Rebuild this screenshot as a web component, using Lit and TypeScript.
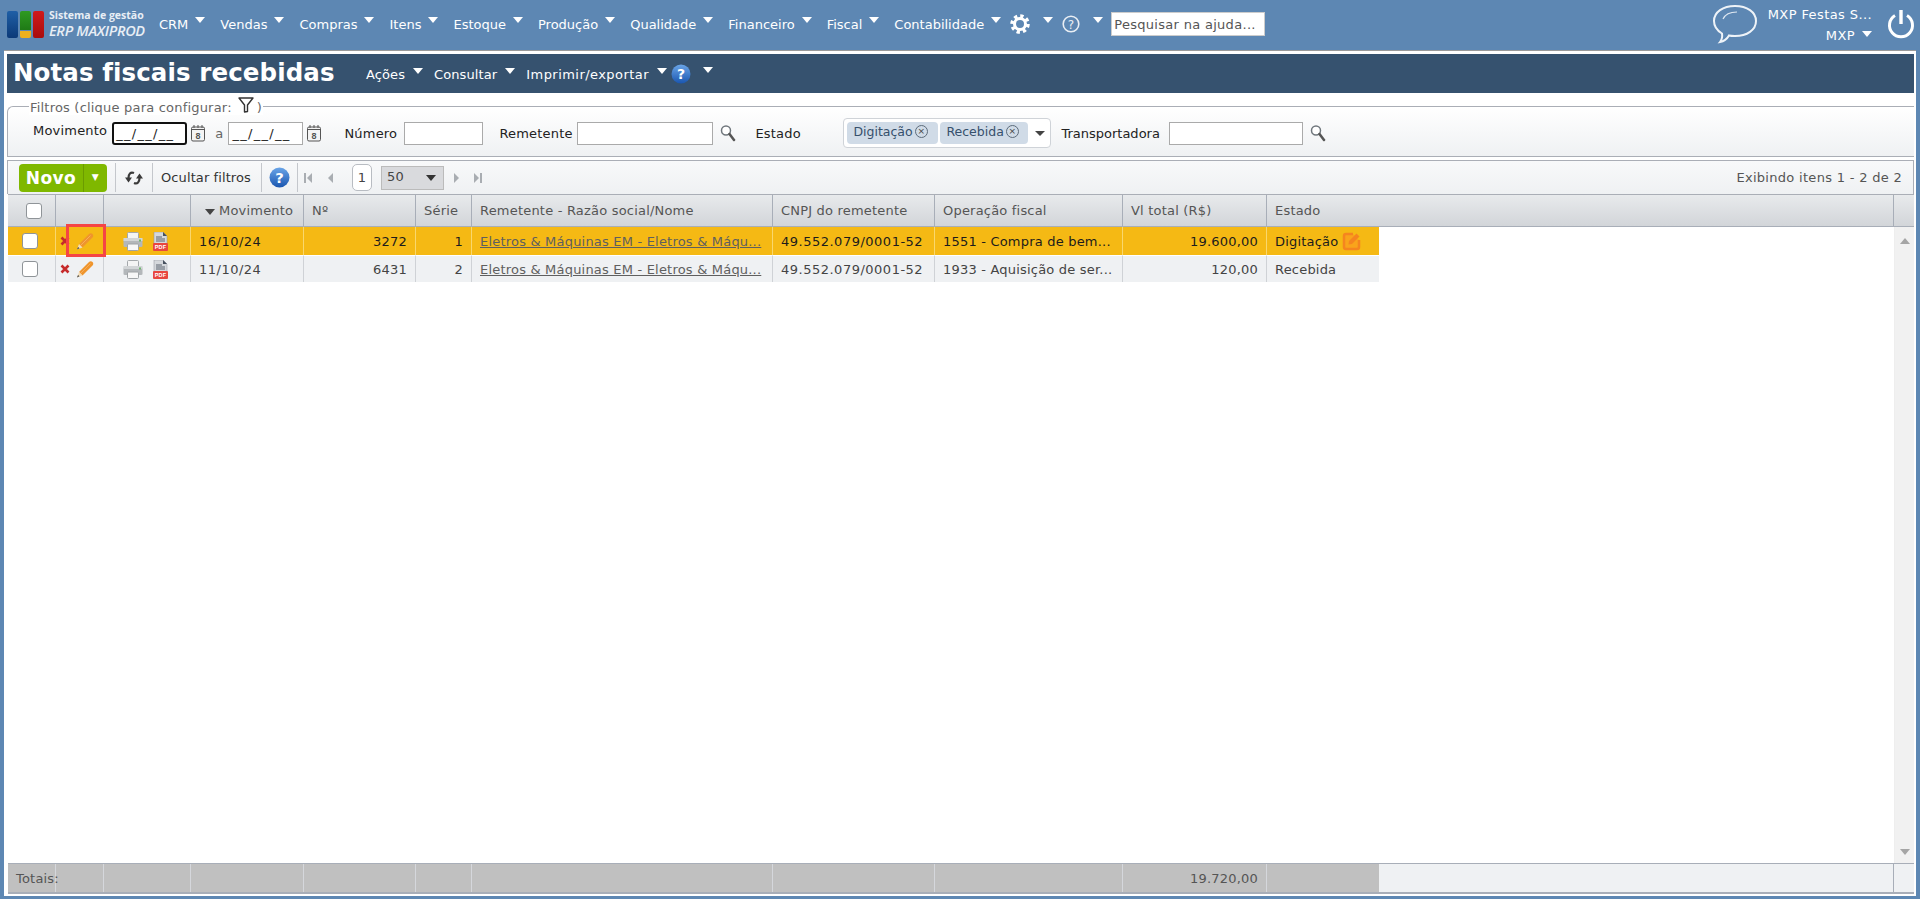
import { LitElement, html, css, svg } from "lit";
import { customElement } from "lit/decorators.js";

const pencil = svg`<svg class="pencil" viewBox="0 0 18 18" width="18" height="18"><path d="M3 12 L13 2 C14 1 15.500 1 16.500 2 C17.500 3 17.500 4.500 16.500 5.500 L6.500 15.500 Z" fill="#ef952c"/><path d="M4.500 13.500 L14.500 3.500" stroke="#f6ad5c" stroke-width="1"/><path d="M3 12 L6.500 15.500 L1 17.500 Z" fill="#f3dcb6"/><path d="M1 17.500 L2 15 L3.500 16.300 Z" fill="#444"/></svg>`;
const cross = svg`<svg viewBox="0 0 10 10" width="10" height="10"><path d="M1.500 1.500 L8.500 8.500 M8.500 1.500 L1.500 8.500" stroke="#c62b2b" stroke-width="2.600"/></svg>`;
const printer = svg`<svg viewBox="0 0 20 19" width="20" height="19"><rect x="4.500" y="0.500" width="11" height="7" rx="1" fill="#f4f4f4" stroke="#a4a8ab"/><path d="M0.500 9 Q0.500 6 3 6 H17 Q19.500 6 19.500 9 V14 Q19.500 15 18 15 H2 Q0.500 15 0.500 14 Z" fill="#b3b7ba"/><rect x="0.500" y="6" width="19" height="3" fill="#d2d5d7"/><rect x="16" y="7.500" width="2" height="2" fill="#6fb56f"/><rect x="4.500" y="12" width="11" height="6.500" rx="1" fill="#f7f7f7" stroke="#9fa3a6"/></svg>`;
const pdf = svg`<svg viewBox="0 0 15 19" width="15" height="19"><path d="M1 0 H10 L14 4 V12 H1 Z" fill="#d5d8dc" stroke="#8d939b" stroke-width="0.500"/><path d="M10 0 L14 4 H10 Z" fill="#46505e"/><path d="M3 5 H9 M3 7 H12 M3 9 H12" stroke="#5c6570" stroke-width="1"/><rect x="0" y="11" width="15" height="8" rx="1" fill="#e8473f"/><text x="7.500" y="17.300" font-size="5.500" font-weight="700" text-anchor="middle" fill="#fff" font-family="Liberation Sans, sans-serif">PDF</text></svg>`;
const editBox = svg`<svg viewBox="0 0 20 20" width="20" height="20"><path d="M11 3 H4 Q2 3 2 5 V16 Q2 18 4 18 H15 Q17 18 17 16 V9" fill="#f9a41b" stroke="#f5851f" stroke-width="2.500"/><path d="M7 10 L14.500 2.500 L17.500 5.500 L10 13 L6.500 13.500 Z" fill="#f5851f"/></svg>`;
const calendar = svg`<svg viewBox="0 0 16 18" width="16" height="18"><rect x="1.500" y="3" width="13" height="14" rx="1.500" fill="#f4f4f4" stroke="#555"/><path d="M2 5.500 H14" stroke="#555"/><path d="M4 1 V4 M8 1 V4 M12 1 V4" stroke="#555"/><text x="8" y="15" font-size="9" font-weight="700" text-anchor="middle" fill="#555" font-family="Liberation Sans, sans-serif">8</text></svg>`;
const search = svg`<svg viewBox="0 0 16 18" width="16" height="18"><circle cx="6" cy="6.500" r="4.500" fill="#fff" stroke="#6f767c" stroke-width="1.500"/><path d="M9.500 10 L14 16" stroke="#555" stroke-width="2.500" stroke-linecap="round"/></svg>`;
const funnel = svg`<svg viewBox="0 0 16 16" width="16" height="16"><path d="M1 1 H15 L9.500 8 V14.500 L6.500 15 V8 Z" fill="#fff" stroke="#333" stroke-width="1.400" stroke-linejoin="round"/></svg>`;
const gear = svg`<svg viewBox="0 0 20 20" width="20" height="20"><circle cx="10" cy="10" r="5.500" fill="none" stroke="#fff" stroke-width="3"/><circle cx="10" cy="10" r="8" fill="none" stroke="#fff" stroke-width="3.500" stroke-dasharray="3.280 3"/></svg>`;
const helpOutline = svg`<svg viewBox="0 0 18 18" width="18" height="18"><circle cx="9" cy="9" r="7.800" fill="none" stroke="#e9eef4" stroke-width="1.600"/><text x="9" y="13.500" font-size="12" text-anchor="middle" fill="#e9eef4" font-family="DejaVu Sans, sans-serif">?</text></svg>`;
const helpBlue = (s: number) => svg`<svg viewBox="0 0 20 20" width=${s} height=${s}><defs><linearGradient id="hb" x1="0" y1="0" x2="0" y2="1"><stop offset="0" stop-color="#6aa5e8"/><stop offset="1" stop-color="#1a56b0"/></linearGradient></defs><circle cx="10" cy="10" r="9.500" fill="url(#hb)"/><text x="10" y="15" font-size="14" font-weight="700" text-anchor="middle" fill="#fff" font-family="DejaVu Sans, sans-serif">?</text></svg>`;
const chat = svg`<svg viewBox="0 0 46 40" width="46" height="40"><path d="M23 2 C35 2 44 8 44 17 C44 26 35 32 23 32 C21 32 19 32 17 31.500 C15 35 11 37.500 8 38 C10 35.500 10.500 32.500 10 29.500 C5 26.500 2 22 2 17 C2 8 11 2 23 2 Z" fill="none" stroke="#eef3f8" stroke-width="2"/><path d="M11 15 C13 10.500 18 8 25 8" fill="none" stroke="#dfe8f1" stroke-width="1.200"/></svg>`;
const power = svg`<svg viewBox="0 0 28 30" width="28" height="30"><path d="M8 6.500 A11.500 11.500 0 1 0 20 6.500" fill="none" stroke="#fff" stroke-width="3"/><path d="M14 1 V15" stroke="#fff" stroke-width="3.400"/></svg>`;
const refresh = svg`<svg viewBox="0 0 18 16" width="18" height="16"><path d="M9 3 C5.500 1.500 3.500 4 3.500 8" fill="none" stroke="#3a3a3a" stroke-width="2.200"/><path d="M0 7.500 H7 L3.500 12.500 Z" fill="#3a3a3a"/><path d="M9 13 C12.500 14.500 14.500 12 14.500 8" fill="none" stroke="#3a3a3a" stroke-width="2.200"/><path d="M11 8.500 H18 L14.500 3.500 Z" fill="#3a3a3a"/></svg>`;
const pageArrow = (d: string, barX: number | null) => svg`<svg viewBox="0 0 10 14" width="10" height="14"><path d=${d} fill="#a9adb2"/>${barX !== null ? svg`<rect x=${barX} y="2" width="2" height="10" fill="#a9adb2"/>` : ""}</svg>`;

const COLS = [
  { label: "", cls: "" },
  { label: "", cls: "" },
  { label: "", cls: "" },
  { label: "Movimento", cls: "sorted" },
  { label: "Nº", cls: "" },
  { label: "Série", cls: "" },
  { label: "Remetente - Razão social/Nome", cls: "" },
  { label: "CNPJ do remetente", cls: "" },
  { label: "Operação fiscal", cls: "" },
  { label: "Vl total (R$)", cls: "" },
  { label: "Estado", cls: "" },
];

const ROWS = [
  { date: "16/10/24", num: "3272", serie: "1", rem: "Eletros & Máquinas EM - Eletros & Máqu...", cnpj: "49.552.079/0001-52", op: "1551 - Compra de bem...", total: "19.600,00", estado: "Digitação", sel: true },
  { date: "11/10/24", num: "6431", serie: "2", rem: "Eletros & Máquinas EM - Eletros & Máqu...", cnpj: "49.552.079/0001-52", op: "1933 - Aquisição de ser...", total: "120,00", estado: "Recebida", sel: false },
];

const MENU = ["CRM", "Vendas", "Compras", "Itens", "Estoque", "Produção", "Qualidade", "Financeiro", "Fiscal", "Contabilidade"];

@customElement("app-root")
export class AppRoot extends LitElement {
  static styles = css`
    :host { display: block; height: 899px; background: #5d87b3; font-family: "DejaVu Sans", Verdana, sans-serif; font-size: 13px; letter-spacing: 0.2px; color: #333; overflow: hidden; }
    * { box-sizing: border-box; }
    .caret { width: 0; height: 0; border-left: 5.5px solid transparent; border-right: 5.5px solid transparent; border-top: 6px solid #fff; flex: none; margin-top: -8px; }
    svg { display: block; flex: none; }

    .top { height: 50px; display: flex; align-items: center; color: #fff; padding-bottom: 2px; letter-spacing: 0; }
    .logo { width: 159px; height: 48px; padding-left: 7px; display: flex; align-items: center; gap: 5px; flex: none; }
    .blocks { display: flex; gap: 2px; height: 27px; }
    .b { width: 11px; border-radius: 2px; }
    .b1 { background: linear-gradient(#1f5fa6, #0c3a78); }
    .b2 { display: flex; flex-direction: column; gap: 1px; }
    .b2 i { display: block; background: linear-gradient(#2f9a22, #1f7a16); height: 19px; border-radius: 2px 2px 0 0; }
    .b2 u { display: block; background: #eeb01e; height: 7px; border-radius: 0 0 2px 2px; }
    .b3 { background: linear-gradient(#d01a1a, #a80c0c); }
    .logo-t { font-family: "Open Sans", sans-serif; color: #e8eef5; line-height: 1; }
    .logo-t b { display: block; font-size: 10.500px; font-weight: 700; margin-bottom: 4px; }
    .logo-t em { display: block; font-size: 14.500px; font-weight: 600; letter-spacing: -0.3px; white-space: nowrap; }
    .menu { display: flex; align-items: center; gap: 15px; }
    .mi { display: flex; align-items: center; gap: 7px; font-size: 13px; line-height: 1; white-space: nowrap; }
    .tools { display: flex; align-items: center; margin-left: 9px; }
    .tools .caret.a { margin-left: 13px; }
    .tools .q { margin-left: 9px; }
    .tools .caret.c { margin-left: 13px; }
    .hsearch { width: 154px; height: 24px; margin-left: 8px; background: #fff; border: 1px solid #ccc; color: #555; font-size: 13px; letter-spacing: 0.3px; padding: 0 0 0 2px; display: flex; align-items: center; white-space: nowrap; }
    .user { margin-left: auto; display: flex; align-items: center; }
    .uname { margin-left: 8px; width: 106px; text-align: right; font-size: 13px; letter-spacing: 0.4px; line-height: 1; display: flex; flex-direction: column; gap: 8px; padding-top: 2px; }
    .uorg { display: flex; align-items: center; justify-content: flex-end; gap: 7px; }
    .uorg .caret { margin-top: -4px; }
    .pw { margin: 0 5px 0 15px; }

    .main { height: 846px; margin: 0 4px; background: #fff; border-top: 1px solid #9a9a9a; padding: 3px 2px 0 3px; display: flex; flex-direction: column; }
    .titlebar { height: 39px; background: #36526f; display: flex; align-items: center; color: #fff; padding-left: 6px; flex: none; letter-spacing: 0; }
    h1 { margin: 0; font-size: 24.500px; font-weight: 700; line-height: 1; width: 353px; letter-spacing: 0.1px; white-space: nowrap; }
    .tm { display: flex; align-items: center; gap: 8px; font-size: 13px; letter-spacing: 0.1px; white-space: nowrap; padding-top: 2px; }
    .tm + .tm { margin-left: 11px; }
    .tm.wide { letter-spacing: 0.45px; }
    .tmh { margin-left: 4px; }
    .tmc { margin-left: 12px; }

    .filters { height: 51px; margin-top: 13px; border-top: 1px solid #aaaeb6; border-left: 1px solid #aaaeb6; border-bottom: 1px solid #aaaeb6; border-top-left-radius: 6px; background: linear-gradient(#fff, #eff1f3); flex: none; }
    .legend { display: flex; align-items: center; width: fit-content; height: 15px; margin: -7px 0 0 21px; padding: 0 1px; background: #fff; color: #666; white-space: nowrap; }
    .legend svg { margin: -6px 3px 0 6px; }
    .frow { display: flex; align-items: center; height: 30px; margin-top: 3px; white-space: nowrap; }
    .frow label { display: block; }
    .inp { height: 23px; border: 1px solid #aaa; background: #fff; flex: none; font-size: 13px; color: #222; line-height: 21px; padding: 0 0 0 3px; overflow: hidden; }
    .inp.date { width: 75px; letter-spacing: 1.3px; }
    .inp.focus { border: 2px solid #111; border-radius: 3px; line-height: 19px; padding-left: 2px; }
    .l-mov { margin: -6px 5px 0 25px; color: #222; }
    .l-a { margin: 0 5px 0 9px; color: #666; }
    .cal { margin-left: 3px; }
    .l-num { margin-left: 22px; width: 60px; color: #222; }
    .w-num { width: 79px; }
    .l-rem { margin-left: 16px; width: 78px; color: #222; }
    .w-rem { width: 136px; }
    .srch { margin-left: 7px; }
    .l-est { margin-left: 19px; width: 88px; color: #222; }
    .ms { width: 208px; height: 30px; background: #fff; border: 1px solid #cfd3d8; border-radius: 4px; display: flex; align-items: center; padding-left: 3px; gap: 2px; position: relative; flex: none; }
    .chip { height: 22px; background: #d0dbe7; border-radius: 4px; display: flex; align-items: center; padding: 0 3px 3px 6px; color: #36506c; gap: 2px; font-size: 12.500px; letter-spacing: 0; }
    .chip .x { width: 13px; height: 13px; border: 1px solid #5c6b7a; border-radius: 50%; font-size: 9px; line-height: 10px; text-align: center; color: #444; }
    .c1 { width: 91px; }
    .c2 { width: 88px; }
    .ms .dn { width: 0; height: 0; border-left: 5px solid transparent; border-right: 5px solid transparent; border-top: 5px solid #444; margin-left: 5px; }
    .l-tr { margin-left: 10px; width: 108px; color: #222; letter-spacing: 0; }
    .w-tr { width: 134px; }

    .toolbar { height: 34px; margin-top: 3px; border: 1px solid #aaaeb6; border-bottom: 0; background: linear-gradient(#f8f9fa, #eff1f3); display: flex; align-items: center; flex: none; }
    .novo { margin-left: 11px; width: 88px; height: 28px; border-radius: 4px; background: #7fb800; display: flex; color: #fff; font-weight: 700; flex: none; margin-top: 1px; letter-spacing: 0.4px; }
    .novo .n1 { width: 64px; font-size: 17px; line-height: 28px; text-align: center; }
    .novo .n2 { width: 24px; border-left: 1px solid #6b9c00; border-radius: 0 4px 4px 0; font-size: 9px; line-height: 27px; text-align: center; }
    .sep { width: 1px; height: 29px; background: #c4c7cc; flex: none; }
    .s1 { margin-left: 8px; }
    .rf { margin: 0 9px 0 9px; }
    .hide { margin: 0 9px; color: #333; white-space: nowrap; width: 90px; letter-spacing: 0.1px; margin-left: 8px; margin-right: 10px; }
    .hb { margin: 0 7px; }
    .pg { margin-left: 6px; display: flex; align-items: center; }
    .pg1 { margin-left: 0; }
    .pg2 { margin-left: 11px; }
    .pbox { margin-left: 17px; width: 20px; height: 27px; border: 1px solid #b8bcc2; border-radius: 5px; background: #fff; text-align: center; line-height: 25px; color: #444; flex: none; }
    .psel { margin: 0 8px 0 9px; width: 63px; height: 24px; background: #d9dadd; border: 1px solid #bbb; display: flex; align-items: center; justify-content: space-between; padding: 0 7px 3px 5px; color: #444; flex: none; }
    .psel i { width: 0; height: 0; border-left: 5.500px solid transparent; border-right: 5.500px solid transparent; border-top: 6px solid #333; margin-top: 3px; }
    .pg3 { margin-left: 11px; }
    .count { margin-left: auto; margin-right: 11px; color: #555; white-space: nowrap; letter-spacing: 0.3px; }

    .grid { flex: 1; display: flex; flex-direction: column; border-top: 1px solid #aaaeb6; min-height: 0; margin-left: 1px; }
    .head { height: 32px; display: flex; border-bottom: 1px solid #a8aeb8; background: linear-gradient(#e8eaec, #d2d5d9); flex: none; }
    .cols { display: grid; grid-template-columns: 48px 48px 87px 113px 112px 56px 301px 162px 188px 144px 112px; width: 1371px; flex: none; }
    .hcell { border-right: 1px solid #a8aeb8; color: #555; padding: 0 8px; display: flex; align-items: center; white-space: nowrap; }
    .hcell:last-child { border-right: 0; }
    .hcell.sorted { padding-left: 14px; gap: 4px; }
    .hcell.sorted i { width: 0; height: 0; border-left: 5.500px solid transparent; border-right: 5.500px solid transparent; border-top: 6px solid #444; margin-top: 2px; }
    .hcell .cb { margin: 0 0 0 10px; }
    .hfill { flex: 1; border-right: 1px solid #a8aeb8; }
    .hcorner { width: 20px; flex: none; }
    .body { flex: 1; display: flex; min-height: 0; }
    .rows { flex: 1; min-width: 0; }
    .row { height: 28px; background: #eff1f3; color: #444; }
    .row:last-child { height: 27px; }
    .row.sel { background: #f5b914; color: #1c1c1c; }
    .cell { border-right: 1px solid #cfd2d6; display: flex; align-items: center; padding: 0 8px; white-space: nowrap; overflow: hidden; min-width: 0; border-top: 1px solid #fff; }
    .row.sel .cell { border-right-color: #f9d76d; border-top: 0; }
    .row:first-child .cell { border-top: 0; }
    .cell:last-child { border-right: 0; }
    .cell.r { justify-content: flex-end; }
    .cell.nums { letter-spacing: 0.5px; }
    .cell a { display: block; color: #5f5f5f; text-decoration: underline; }
    .row .cell.act { padding: 0 0 0 4px; }
    .cb { width: 16px; height: 16px; background: #fff; border: 1px solid #8f9498; border-radius: 3px; flex: none; }
    .cell .cbw { margin-left: 6px; }
    .act .pencil { margin-left: 6px; }
    .pr { margin-left: 15px; }
    .pf { margin-left: 10px; }
    .digi { gap: 4px; }
    .hl { position: absolute; left: 66px; top: 224px; width: 40px; height: 33px; border: 3px solid #f54545; }
    .bar { width: 20px; flex: none; background: #f1f1f1; display: flex; flex-direction: column; justify-content: space-between; align-items: center; padding: 11px 0 8px; border-left: 1px solid #eee; }
    .bar i { width: 0; height: 0; border-left: 5.500px solid transparent; border-right: 5.500px solid transparent; }
    .bar .u { border-bottom: 6px solid #a5a5a5; }
    .bar .d { border-top: 6px solid #a5a5a5; }
    .foot { height: 31px; border-top: 1px solid #a8aeb8; border-bottom: 2px solid #a8aeb8; display: flex; background: #eff1f3; flex: none; margin-bottom: 2px; }
    .fcell { background: #c0c0c0; border-right: 1px solid #d5d7dc; color: #555; display: flex; align-items: center; padding: 0 8px; white-space: nowrap; min-width: 0; }
    .fcell.first { padding-right: 0; position: relative; z-index: 1; }
    .fcell.r { justify-content: flex-end; }
    .fcell:last-child { border-right: 0; }
    .ffill { flex: 1; border-right: 1px solid #a8aeb8; }
  `;

  private cb() { return html`<div class="cb"></div>`; }

  render() {
    const foot = ["Totais:", "", "", "", "", "", "", "", "", "19.720,00", ""];
    return html`
      <div class="top">
        <div class="logo">
          <div class="blocks">
            <div class="b b1"></div>
            <div class="b b2"><i></i><u></u></div>
            <div class="b b3"></div>
          </div>
          <div class="logo-t"><b>Sistema de gestão</b><em>ERP MAXIPROD</em></div>
        </div>
        <div class="menu">${MENU.map((m) => html`<div class="mi">${m}<span class="caret"></span></div>`)}</div>
        <div class="tools">
          ${gear}<span class="caret a"></span>
          <span class="q">${helpOutline}</span><span class="caret c"></span>
        </div>
        <div class="hsearch">Pesquisar na ajuda...</div>
        <div class="user">
          ${chat}
          <div class="uname"><div>MXP Festas S...</div><div class="uorg">MXP<span class="caret"></span></div></div>
          <div class="pw">${power}</div>
        </div>
      </div>
      <div class="main">
        <div class="titlebar">
          <h1>Notas fiscais recebidas</h1>
          <div class="tm">Ações<span class="caret"></span></div>
          <div class="tm">Consultar<span class="caret"></span></div>
          <div class="tm wide">Imprimir/exportar<span class="caret"></span></div>
          <span class="tmh">${helpBlue(20)}</span><span class="caret tmc"></span>
        </div>
        <div class="filters">
          <div class="legend">Filtros (clique para configurar:${funnel})</div>
          <div class="frow">
            <label class="l-mov">Movimento</label>
            <div class="inp date focus">__/__/__</div>
            <span class="cal">${calendar}</span>
            <label class="l-a">a</label>
            <div class="inp date">__/__/__</div>
            <span class="cal">${calendar}</span>
            <label class="l-num">Número</label>
            <div class="inp w-num"></div>
            <label class="l-rem">Remetente</label>
            <div class="inp w-rem"></div>
            <span class="srch">${search}</span>
            <label class="l-est">Estado</label>
            <div class="ms">
              <div class="chip c1">Digitação<span class="x">×</span></div>
              <div class="chip c2">Recebida<span class="x">×</span></div>
              <span class="dn"></span>
            </div>
            <label class="l-tr">Transportadora</label>
            <div class="inp w-tr"></div>
            <span class="srch">${search}</span>
          </div>
        </div>
        <div class="toolbar">
          <div class="novo"><div class="n1">Novo</div><div class="n2">▼</div></div>
          <div class="sep s1"></div>
          <span class="rf">${refresh}</span>
          <div class="sep"></div>
          <div class="hide">Ocultar filtros</div>
          <div class="sep"></div>
          <span class="hb">${helpBlue(21)}</span>
          <div class="sep"></div>
          <span class="pg">${pageArrow("M8 2 L3 7 L8 12 Z", 0)}</span>
          <span class="pg pg2">${pageArrow("M8 2 L3 7 L8 12 Z", null)}</span>
          <div class="pbox">1</div>
          <div class="psel">50<i></i></div>
          <span class="pg pg1">${pageArrow("M2 2 L7 7 L2 12 Z", null)}</span>
          <span class="pg pg3">${pageArrow("M1 2 L6 7 L1 12 Z", 7)}</span>
          <div class="count">Exibindo itens 1 - 2 de 2</div>
        </div>
        <div class="grid">
          <div class="head">
            <div class="cols">
              ${COLS.map((c, i) => html`<div class="hcell ${c.cls}">
                ${i === 0 ? html`<div class="cb"></div>` : ""}
                ${c.cls === "sorted" ? html`<i></i>` : ""}${c.label}
              </div>`)}
            </div>
            <div class="hfill"></div>
            <div class="hcorner"></div>
          </div>
          <div class="body">
            <div class="rows">
              ${ROWS.map((r) => html`<div class="row cols ${r.sel ? "sel" : ""}">
                <div class="cell"><span class="cbw">${this.cb()}</span></div>
                <div class="cell act">${cross}${pencil}</div>
                <div class="cell act"><span class="pr">${printer}</span><span class="pf">${pdf}</span></div>
                <div class="cell nums">${r.date}</div>
                <div class="cell r">${r.num}</div>
                <div class="cell r">${r.serie}</div>
                <div class="cell"><a>${r.rem}</a></div>
                <div class="cell nums">${r.cnpj}</div>
                <div class="cell">${r.op}</div>
                <div class="cell r">${r.total}</div>
                <div class="cell digi">${r.estado}${r.sel ? editBox : ""}</div>
              </div>`)}
            </div>
            <div class="bar"><i class="u"></i><i class="d"></i></div>
          </div>
          <div class="foot">
            <div class="cols">
              ${foot.map((f, i) => html`<div class="fcell ${i === 9 ? "r" : ""} ${i === 0 ? "first" : ""}">${f}</div>`)}
            </div>
            <div class="ffill"></div>
            <div class="hcorner"></div>
          </div>
        </div>
      </div>
      <div class="hl"></div>
    `;
  }
}
